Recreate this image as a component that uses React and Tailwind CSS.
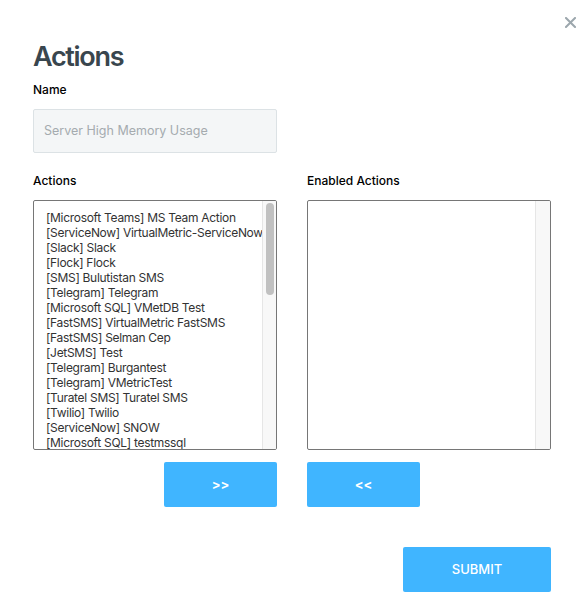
import React from "react";

const items = [
  "[Microsoft Teams] MS Team Action",
  "[ServiceNow] VirtualMetric-ServiceNow",
  "[Slack] Slack",
  "[Flock] Flock",
  "[SMS] Bulutistan SMS",
  "[Telegram] Telegram",
  "[Microsoft SQL] VMetDB Test",
  "[FastSMS] VirtualMetric FastSMS",
  "[FastSMS] Selman Cep",
  "[JetSMS] Test",
  "[Telegram] Burgantest",
  "[Telegram] VMetricTest",
  "[Turatel SMS] Turatel SMS",
  "[Twilio] Twilio",
  "[ServiceNow] SNOW",
  "[Microsoft SQL] testmssql",
  "[Email] Default Email",
];

export default function App() {
  return (
    <div
      className="relative w-[588px] h-[612px] bg-white overflow-hidden"
      style={{ fontFamily: "Inter, 'Open Sans', sans-serif" }}
    >
      <button className="absolute left-[565px] top-[17px] w-[11px] h-[11px]">
        <svg width="11" height="11" viewBox="0 0 11 11">
          <path d="M1 1 L10 10 M10 1 L1 10" stroke="#9ca7ad" strokeWidth="2" strokeLinecap="square" />
        </svg>
      </button>

      <div className="pl-[33px] pt-[40px] w-[551px]">
        <h1 className="text-[27px] leading-[34px] font-semibold tracking-[-1.3px] text-[#39464e]">Actions</h1>
        <div className="mt-[8px] text-[12px] leading-[16px] font-medium text-black">Name</div>
        <div className="mt-[11px] w-[244px] h-[44px] bg-[#f4f6f7] border border-[#dce2e5] rounded-[2px] flex items-center pl-[10px] text-[12.5px] text-[#a5abaf]">
          Server High Memory Usage
        </div>

        <div className="mt-[20px] flex gap-[30px]">
          <div className="w-[244px]">
            <div className="text-[12px] leading-[16px] font-medium text-black">Actions</div>
            <div className="mt-[11px] h-[250px] border border-[#767676] rounded-[2px] flex overflow-hidden">
              <div className="flex-1 overflow-hidden pt-[9px] pl-[12px]">
                {items.map((t) => (
                  <div key={t} className="text-[12px] leading-[15px] text-[#333] whitespace-nowrap tracking-[-0.3px]">
                    {t}
                  </div>
                ))}
              </div>
              <div className="w-[14px] bg-[#f8f8f8] border-l border-[#e6e6e6] pt-[2px] flex justify-center">
                <div className="w-[8px] h-[92px] rounded-full bg-[#c1c1c1]" />
              </div>
            </div>
            <div className="mt-[12px] flex justify-end">
              <button className="w-[113px] h-[45px] bg-[#40b5ff] rounded-[2px] text-white text-[13px] font-bold">
                &gt;&gt;
              </button>
            </div>
          </div>

          <div className="w-[244px]">
            <div className="text-[12px] leading-[16px] font-medium text-black">Enabled Actions</div>
            <div className="mt-[11px] h-[250px] border border-[#767676] rounded-[2px] flex overflow-hidden">
              <div className="flex-1" />
              <div className="w-[15px] bg-[#f8f8f8] border-l border-[#e6e6e6]" />
            </div>
            <div className="mt-[12px] flex justify-start">
              <button className="w-[113px] h-[45px] bg-[#40b5ff] rounded-[2px] text-white text-[13px] font-bold">
                &lt;&lt;
              </button>
            </div>
          </div>
        </div>

        <div className="mt-[40px] flex justify-end">
          <button className="w-[148px] h-[45px] bg-[#40b5ff] rounded-[2px] text-white text-[13px] font-medium">
            SUBMIT
          </button>
        </div>
      </div>
    </div>
  );
}
